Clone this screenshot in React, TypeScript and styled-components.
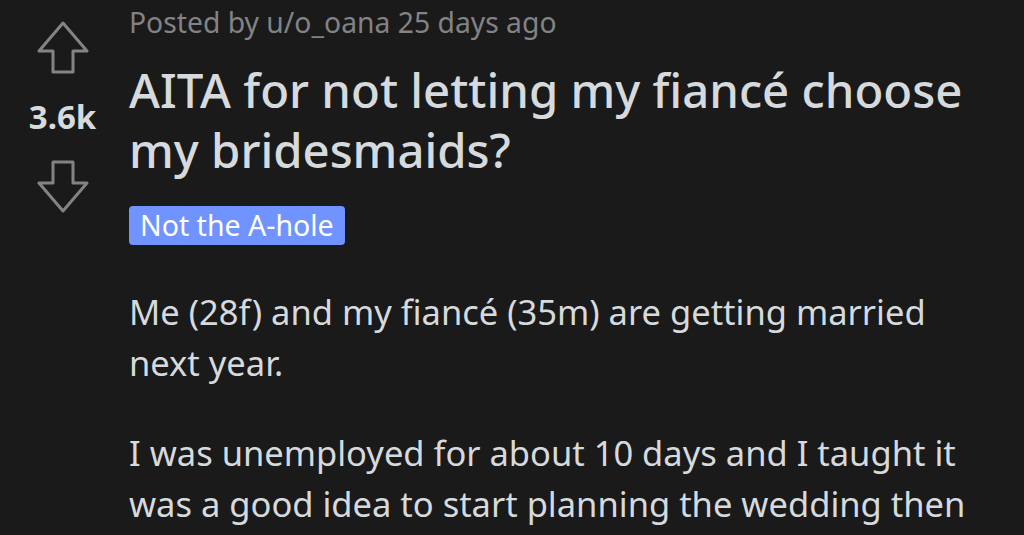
import React from "react";
import styled, { createGlobalStyle } from "styled-components";

const Global = createGlobalStyle`
  html, body { margin: 0; padding: 0; background: #1a1a1b; }
  body { width: 1024px; height: 535px; overflow: hidden; }
`;

const Page = styled.div`
  display: flex;
  width: 1024px;
  height: 535px;
  background: #1a1a1b;
  overflow: hidden;
`;

const VoteColumn = styled.div`
  width: 125px;
  flex: none;
  display: flex;
  flex-direction: column;
  align-items: center;
  padding-top: 21px;
  box-sizing: border-box;
`;

const Score = styled.div`
  font-family: "Noto Sans", sans-serif;
  font-weight: 700;
  font-size: 33px;
  color: #d7dadc;
  line-height: 1;
  margin: 25px 0 26px;
`;

const Content = styled.div`
  flex: 1;
  padding-left: 4px;
  display: flex;
  flex-direction: column;
`;

const Meta = styled.div`
  font-family: "Noto Sans", sans-serif;
  font-size: 28.3px;
  color: #818384;
  line-height: 28px;
  margin-top: 8px;
`;

const Title = styled.h1`
  font-family: "Noto Sans", sans-serif;
  font-weight: 500;
  font-size: 47.3px;
  line-height: 60px;
  color: #d7dadc;
  margin: 24px 0 0;
`;

const Flair = styled.span`
  align-self: flex-start;
  background: #7193ff;
  color: #ffffff;
  font-family: "Noto Sans", sans-serif;
  font-size: 28.5px;
  line-height: 39px;
  padding: 0 11px;
  border-radius: 4px;
  margin-top: 26px;
`;

const Paragraph = styled.p<{ $first?: boolean }>`
  font-family: "Noto Sans", sans-serif;
  font-size: 34.5px;
  line-height: 51px;
  color: #d7dadc;
  margin: ${(p) => (p.$first ? "41px" : "39px")} 0 0;
`;

const Arrow = ({ down }: { down?: boolean }) => (
  <svg
    width="54"
    height="54"
    viewBox="0 0 54 54"
    style={down ? { transform: "rotate(180deg)" } : undefined}
  >
    <path
      d="M27 2 L51 30 L37 30 L37 51 L17 51 L17 30 L3 30 Z"
      fill="none"
      stroke="#818384"
      strokeWidth="3"
      strokeLinejoin="round"
    />
  </svg>
);

export default function App() {
  return (
    <>
      <Global />
      <Page>
        <VoteColumn>
          <Arrow />
          <Score>3.6k</Score>
          <Arrow down />
        </VoteColumn>
        <Content>
          <Meta>Posted by u/o_oana 25 days ago</Meta>
          <Title>
            AITA for not letting my fiancé choose
            <br />
            my bridesmaids?
          </Title>
          <Flair>Not the A-hole</Flair>
          <Paragraph $first>
            Me (28f) and my fiancé (35m) are getting married
            <br />
            next year.
          </Paragraph>
          <Paragraph>
            I was unemployed for about 10 days and I taught it
            <br />
            was a good idea to start planning the wedding then
          </Paragraph>
        </Content>
      </Page>
    </>
  );
}
